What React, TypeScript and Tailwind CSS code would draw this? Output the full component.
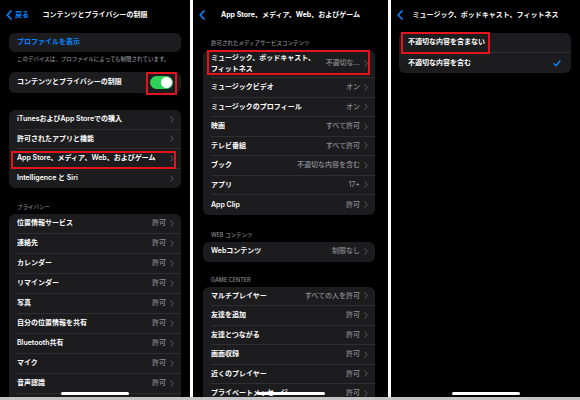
import type { ReactNode } from "react";

function Chevron() {
    return (
        <svg width="4" height="7" viewBox="0 0 4 7" className="shrink-0 ml-[4px]">
            <path d="M0.8 0.8L3.2 3.5L0.8 6.2" fill="none" stroke="#5e5e63" strokeWidth="1" strokeLinecap="round" strokeLinejoin="round" />
        </svg>
    );
}

function BackChevron() {
    return (
        <svg width="6" height="10" viewBox="0 0 6 10" className="shrink-0">
            <path d="M5 1L1.2 5L5 9" fill="none" stroke="#0a84ff" strokeWidth="1.7" strokeLinecap="round" strokeLinejoin="round" />
        </svg>
    );
}

function Mark({ className }: { className: string }) {
    return <div className={`absolute border-2 border-[#e3141d] pointer-events-none ${className}`} />;
}

function NavBar({ title, back }: { title: string; back?: string }) {
    return (
        <div className="h-[30px] grid grid-cols-[1fr_auto_1fr] items-center px-[6px]">
            <div className="flex items-center gap-[3px] text-[#0a84ff] text-[7px] font-semibold">
                <BackChevron />
                {back && <span>{back}</span>}
            </div>
            <h1 className="text-white text-[7px] font-bold whitespace-nowrap">{title}</h1>
            <div />
        </div>
    );
}

function Row({
    label,
    value,
    h = "h-[20px]",
    last,
    children,
}: {
    label: ReactNode;
    value?: string;
    h?: string;
    last?: boolean;
    children?: ReactNode;
}) {
    return (
        <div className={`relative pl-[8px] ${h}`}>
            <div className={`h-full flex items-center pr-[7px] ${last ? "" : "border-b-[0.5px] border-[#2f2f33]"}`}>
                <span className="flex-1 text-white text-[7px] font-semibold whitespace-nowrap leading-[10.5px]">{label}</span>
                {value && <span className="text-[#8d8d93] text-[7px] font-medium whitespace-nowrap">{value}</span>}
                <Chevron />
            </div>
            {children}
        </div>
    );
}

function SectionHeader({ text, h }: { text: string; h: string }) {
    return (
        <div className={`${h} flex items-end pb-[3px] pl-[8px]`}>
            <span className="text-[#8d8d93] text-[5.5px] font-medium leading-[8px] whitespace-nowrap">{text}</span>
        </div>
    );
}

function HomeBar() {
    return <div className="absolute bottom-[2px] left-1/2 -translate-x-1/2 w-[68px] h-[3px] rounded-full bg-white" />;
}

const privacy = [
    "位置情報サービス",
    "連絡先",
    "カレンダー",
    "リマインダー",
    "写真",
    "自分の位置情報を共有",
    "Bluetooth共有",
    "マイク",
    "音声認識",
    "カメラの使用",
];

function RestrictionsScreen() {
    return (
        <div className="relative w-[190px] h-full bg-black overflow-hidden">
            <NavBar title="コンテンツとプライバシーの制限" back="戻る" />

            <div className="mx-[9px] mt-[3px] h-[19px] rounded-[6px] bg-[#1c1c1e] flex items-center pl-[8px]">
                <span className="text-[#0a84ff] text-[7px] font-semibold">プロファイルを表示</span>
            </div>
            <div className="h-[14px] flex items-center pl-[17px]">
                <span className="text-[#8d8d93] text-[5.5px] font-medium whitespace-nowrap">このデバイスは、プロファイルによっても制限されています。</span>
            </div>

            <div className="relative mx-[9px] mt-[6px] h-[21px] rounded-[6px] bg-[#1c1c1e] flex items-center pl-[8px] pr-[8px]">
                <span className="flex-1 text-white text-[7px] font-semibold">コンテンツとプライバシーの制限</span>
                <div className="w-[23px] h-[13px] rounded-full bg-[#30d158] flex items-center justify-end pr-[1px]">
                    <div className="w-[11px] h-[11px] rounded-full bg-white" />
                </div>
                <Mark className="left-[137px] top-0 w-[31px] h-[23px]" />
            </div>

            <div className="mx-[9px] mt-[17px] rounded-[6px] bg-[#1c1c1e]">
                <Row label="iTunesおよびApp Storeでの購入" h="h-[19.5px]" />
                <Row label="許可されたアプリと機能" h="h-[19.5px]" />
                <Row label="App Store、メディア、Web、およびゲーム" h="h-[19.5px]">
                    <Mark className="left-[2px] top-[1.5px] w-[165px] h-[18px]" />
                </Row>
                <Row label="Intelligence と Siri" h="h-[19.5px]" last />
            </div>

            <div className="mx-[9px]">
                <SectionHeader text="プライバシー" h="h-[26px]" />
            </div>
            <div className="mx-[9px] rounded-[6px] bg-[#1c1c1e]">
                {privacy.map((p) => (
                    <Row key={p} label={p} value="許可" />
                ))}
            </div>
            <HomeBar />
        </div>
    );
}

const media: [string, string][] = [
    ["ミュージックビデオ", "オン"],
    ["ミュージックのプロフィール", "オン"],
    ["映画", "すべて許可"],
    ["テレビ番組", "すべて許可"],
    ["ブック", "不適切な内容を含む"],
    ["アプリ", "17+"],
    ["App Clip", "許可"],
];

const gameCenter: [string, string][] = [
    ["マルチプレイヤー", "すべての人を許可"],
    ["友達を追加", "許可"],
    ["友達とつながる", "許可"],
    ["画面収録", "許可"],
    ["近くのプレイヤー", "許可"],
    ["プライベートメッセージ", "許可"],
    ["プロフィールのプライバシー変更", "許可"],
];

function StoreScreen() {
    return (
        <div className="relative w-[195px] h-full bg-black overflow-hidden">
            <NavBar title="App Store、メディア、Web、およびゲーム" />
            <div className="ml-[10px] mr-[13px]">
                <SectionHeader text="許可されたメディアサービスコンテンツ" h="h-[20px]" />
                <div className="rounded-[6px] bg-[#1c1c1e]">
                    <Row
                        h="h-[28px]"
                        value="不適切な…"
                        label={
                            <>
                                ミュージック、ポッドキャスト、
                                <br />
                                フィットネス
                            </>
                        }
                    >
                        <Mark className="left-[4px] top-0 w-[163px] h-[25px]" />
                    </Row>
                    {media.map(([l, v], i) => (
                        <Row key={l} label={l} value={v} h="h-[19.5px]" last={i === media.length - 1} />
                    ))}
                </div>

                <SectionHeader text="WEB コンテンツ" h="h-[27px]" />
                <div className="rounded-[6px] bg-[#1c1c1e]">
                    <Row label="Webコンテンツ" value="制限なし" last />
                </div>

                <SectionHeader text="GAME CENTER" h="h-[25px]" />
                <div className="rounded-[6px] bg-[#1c1c1e]">
                    {gameCenter.map(([l, v]) => (
                        <Row key={l} label={l} value={v} h="h-[19.5px]" />
                    ))}
                </div>
            </div>
            <HomeBar />
        </div>
    );
}

function MusicScreen() {
    return (
        <div className="relative w-[189px] h-full bg-black overflow-hidden">
            <NavBar title="ミュージック、ポッドキャスト、フィットネス" />
            <div className="ml-[8px] mr-[9px] mt-[3px] rounded-[6px] bg-[#1c1c1e]">
                <div className="relative h-[20px] pl-[9px]">
                    <div className="h-full flex items-center border-b-[0.5px] border-[#2f2f33]">
                        <span className="text-white text-[7px] font-semibold">不適切な内容を含まない</span>
                    </div>
                    <Mark className="left-[2px] -top-[1px] w-[89px] h-[22px]" />
                </div>
                <div className="h-[20px] pl-[9px] pr-[10px] flex items-center">
                    <span className="flex-1 text-white text-[7px] font-semibold">不適切な内容を含む</span>
                    <svg width="8" height="7" viewBox="0 0 8 7">
                        <path d="M1 3.8L3 5.8L7 1" fill="none" stroke="#0a84ff" strokeWidth="1.4" strokeLinecap="round" strokeLinejoin="round" />
                    </svg>
                </div>
            </div>
            <HomeBar />
        </div>
    );
}

export default function App() {
    return (
        <div className="w-[580px] h-[400px] bg-white flex flex-col font-['Inter','Noto_Sans_CJK_JP',sans-serif]">
            <div className="h-[397px] flex gap-[3px]">
                <RestrictionsScreen />
                <StoreScreen />
                <MusicScreen />
            </div>
            <div className="flex-1 bg-[#c4c4c4]" />
        </div>
    );
}
